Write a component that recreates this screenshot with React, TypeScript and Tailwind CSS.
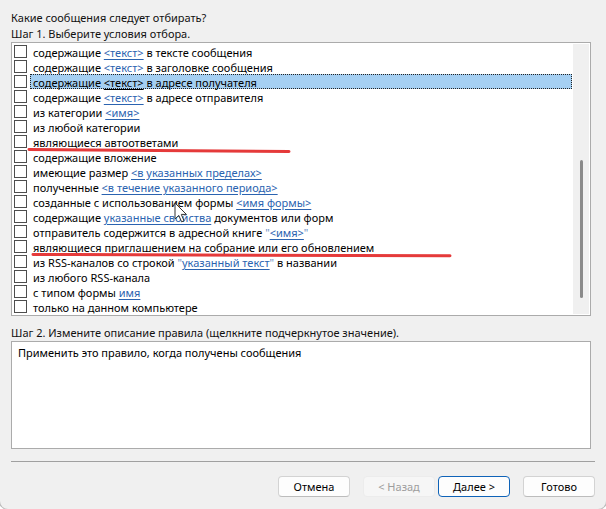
import React from "react"

type Seg = { t: string; link?: boolean; q?: boolean }

const rows: Seg[][] = [
  [{ t: "содержащие " }, { t: "<текст>", link: true }, { t: " в тексте сообщения" }],
  [{ t: "содержащие " }, { t: "<текст>", link: true }, { t: " в заголовке сообщения" }],
  [{ t: "содержащие " }, { t: "<текст>", link: true }, { t: " в адресе получателя" }],
  [{ t: "содержащие " }, { t: "<текст>", link: true }, { t: " в адресе отправителя" }],
  [{ t: "из категории " }, { t: "<имя>", link: true }],
  [{ t: "из любой категории" }],
  [{ t: "являющиеся автоответами" }],
  [{ t: "содержащие вложение" }],
  [{ t: "имеющие размер " }, { t: "<в указанных пределах>", link: true }],
  [{ t: "полученные " }, { t: "<в течение указанного периода>", link: true }],
  [{ t: "созданные с использованием формы " }, { t: "<имя формы>", link: true }],
  [{ t: "содержащие " }, { t: "указанные свойства", link: true }, { t: " документов или форм" }],
  [{ t: "отправитель содержится в адресной книге " }, { t: "\"", q: true }, { t: "<имя>", link: true }, { t: "\"", q: true }],
  [{ t: "являющиеся приглашением на собрание или его обновлением" }],
  [{ t: "из RSS-каналов со строкой " }, { t: "\"", q: true }, { t: "указанный текст", link: true }, { t: "\"", q: true }, { t: " в названии" }],
  [{ t: "из любого RSS-канала" }],
  [{ t: "с типом формы " }, { t: "имя", link: true }],
  [{ t: "только на данном компьютере" }],
]

const SELECTED = 2

function Row({ segs, selected }: { segs: Seg[]; selected: boolean }) {
  return (
    <div className="flex h-[15px] items-center">
      <div className="ml-[2px] h-[13px] w-[13px] shrink-0 border border-[#4d4d4d] bg-white" />
      <div
        className={
          selected
            ? "ml-[3px] flex h-[15px] flex-1 items-center whitespace-pre border border-dotted border-[#222] bg-[#a5cff2] pt-[1px] pl-[2px] leading-[13px]"
            : "ml-[3px] flex h-[15px] flex-1 items-center whitespace-pre border border-transparent pt-[1px] pl-[2px] leading-[13px]"
        }
      >
        {segs.map((s, i) =>
          s.link ? (
            <span
              key={i}
              className={selected ? "text-black underline underline-offset-2" : "text-[#2b63b0] underline underline-offset-2"}
            >
              {s.t}
            </span>
          ) : s.q ? (
            <span key={i} className={selected ? "text-black" : "text-[#6b8fc4]"}>
              {s.t}
            </span>
          ) : (
            <span key={i}>{s.t}</span>
          ),
        )}
      </div>
    </div>
  )
}

function Button({ label, primary, disabled }: { label: string; primary?: boolean; disabled?: boolean }) {
  let cls = "flex h-[21px] w-[72px] items-center justify-center rounded-[4px] border text-[11px] "
  if (disabled) cls += "border-[#ececec] bg-[#f6f6f6] text-[#9d9d9d]"
  else if (primary) cls += "border-[#0f63b8] bg-[#fdfdfd] text-black"
  else cls += "border-[#d3d3d3] border-b-[#bcbcbc] bg-[#fdfdfd] text-black"
  return <div className={cls}>{label}</div>
}

export default function App() {
  return (
    <div className="h-[509px] w-[606px] bg-white">
      <div
        className="relative flex h-[509px] w-[606px] flex-col overflow-hidden rounded-b-[8px] bg-[#f0f0f0] pl-[11px] text-[11px] leading-[17px] text-[#111] shadow-[0_0_0_1px_#bdbdbd]"
        style={{ fontFamily: '"Noto Sans", "Open Sans", sans-serif' }}
      >
        <div className="pt-[9px]">Какие сообщения следует отбирать?</div>
        <div className="-mt-[1px]">Шаг 1. Выберите условия отбора.</div>

        {/* list of conditions */}
        <div className="flex h-[274px] w-[580px] border border-[#ababab] bg-white">
          <div className="flex-1 pt-[1px] text-black">
            {rows.map((r, i) => (
              <Row key={i} segs={r} selected={i === SELECTED} />
            ))}
          </div>
          <div className="my-[1px] mr-[1px] ml-[1px] flex w-[16px] justify-center bg-[#f0f0f0]">
            <div className="mt-[116px] h-[138px] w-[3px] rounded-full bg-[#8a8a8a]" />
          </div>
        </div>

        <div className="mt-[8px]">Шаг 2. Измените описание правила (щелкните подчеркнутое значение).</div>
        <div className="h-[108px] w-[580px] border border-[#ababab] bg-white pt-[2px] pl-[6px] text-black">
          Применить это правило, когда получены сообщения
        </div>

        <div className="mt-[12px] h-[2px] w-[584px] border-t border-[#a0a0a0] bg-[#f0f0f0]" />

        <div className="mt-[13px] flex w-[584px] justify-end">
          <Button label="Отмена" />
          <div className="ml-[13px]">
            <Button label="< Назад" disabled />
          </div>
          <div className="ml-[3px]">
            <Button label="Далее >" primary />
          </div>
          <div className="ml-[13px]">
            <Button label="Готово" />
          </div>
        </div>

        {/* red hand-drawn marks */}
        <svg className="pointer-events-none absolute left-0 top-0" width="606" height="509">
          <path d="M29 149.6 C 120 150.2, 220 150.8, 289 151.6" stroke="#e53a3a" strokeWidth="3" fill="none" strokeLinecap="round" />
          <path d="M33 254.4 C 180 254.8, 330 255.4, 450 255.8" stroke="#e53a3a" strokeWidth="3" fill="none" strokeLinecap="round" />
        </svg>

        {/* mouse pointer */}
        <svg className="pointer-events-none absolute left-[174px] top-[202px]" width="14" height="22" viewBox="0 0 14 22">
          <path d="M1 1 L1 17 L4.8 13.4 L7.6 19.8 L10 18.8 L7.3 12.4 L12.4 12.4 Z" fill="#fff" stroke="#333" strokeWidth="1" strokeLinejoin="round" />
        </svg>
      </div>
    </div>
  )
}
